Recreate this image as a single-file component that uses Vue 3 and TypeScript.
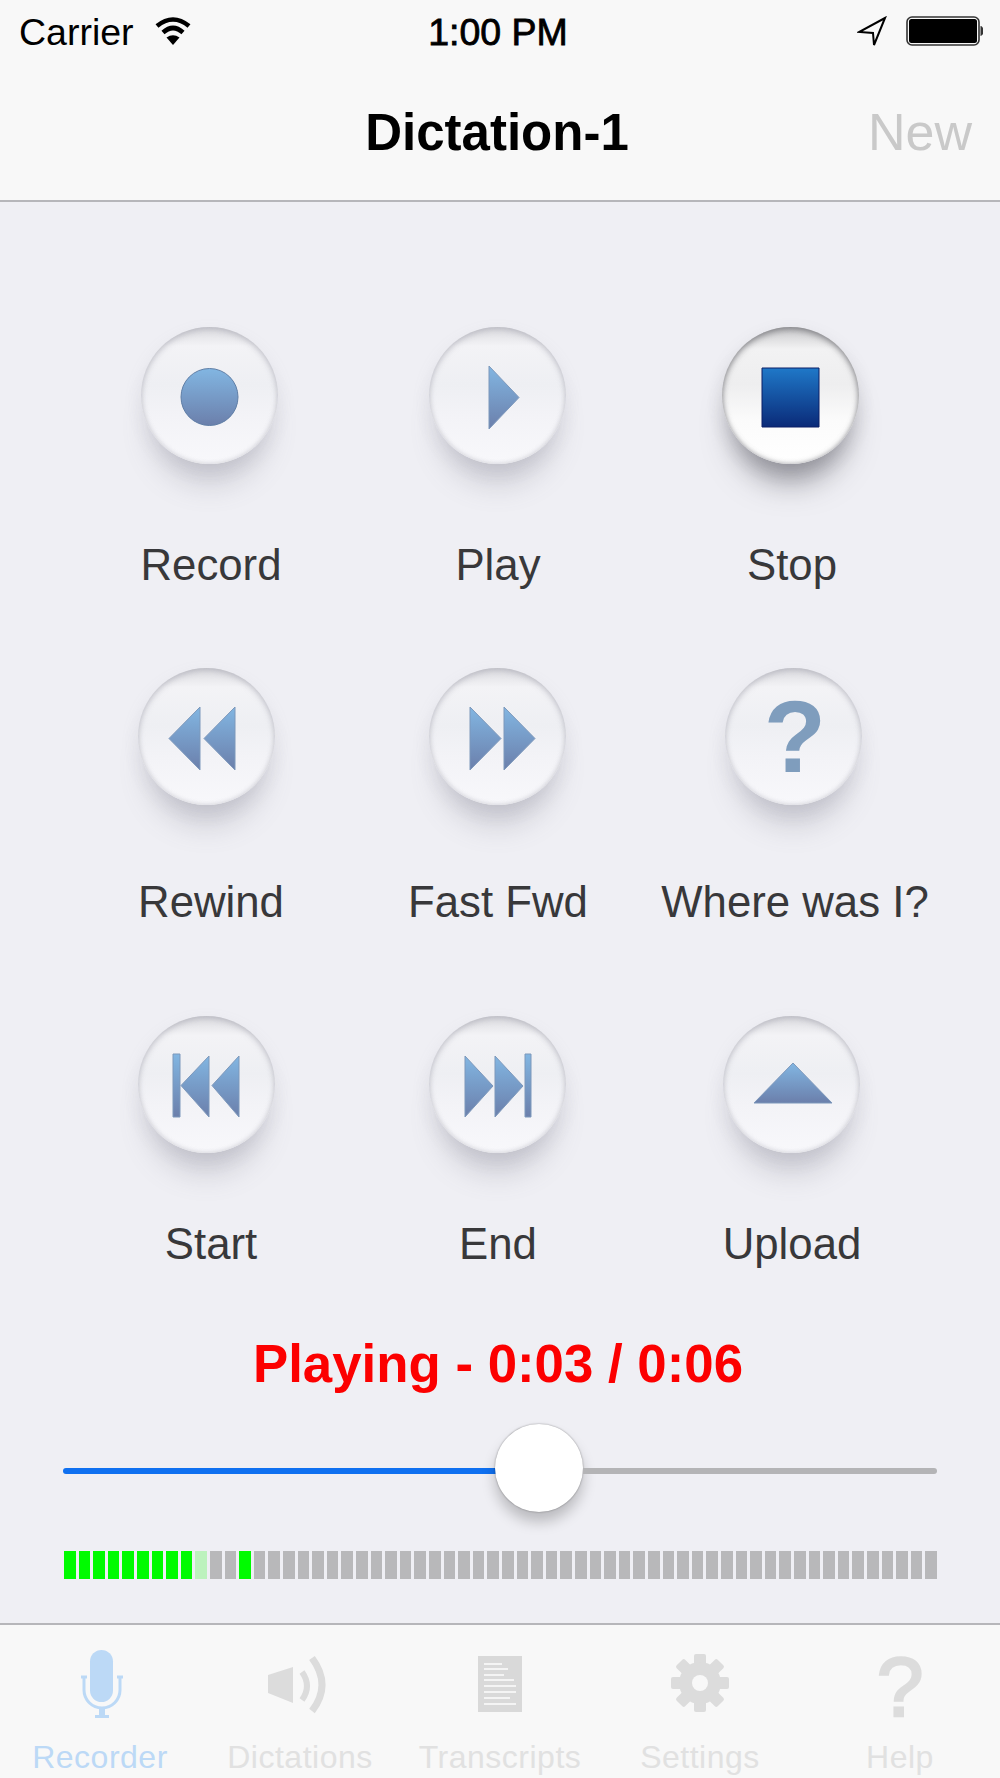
<template>
  <div class="screen">
    <header class="top-bar">
      <div class="status-row">
        <div class="status-left">
          <span class="carrier">Carrier</span>
          <svg class="wifi" width="36" height="29" viewBox="0 0 36 29" fill="none" stroke="#000" stroke-width="4.6">
            <path d="M2 10Q18 -3 34 10" />
            <path d="M8 16.5Q18 7.5 28 16.5" />
            <path d="M11.5 21.5Q18 17 24.5 21.5L18 29Z" fill="#000" stroke="none" />
          </svg>
        </div>
        <span class="clock">1:00 PM</span>
        <div class="status-right">
          <svg width="30" height="31" viewBox="0 0 30 31" fill="none" stroke="#000" stroke-width="2">
            <path d="M28 2L2 16L16 17L17 29Z" stroke-linejoin="miter" />
          </svg>
          <svg width="77" height="30" viewBox="0 0 77 30">
            <rect x="1" y="1" width="72" height="28" rx="5" fill="none" stroke="#333" stroke-width="1.6" />
            <rect x="3" y="3" width="68" height="24" rx="2.5" fill="#000" />
            <path d="M74.5 10a3 5 0 0 1 0 10Z" fill="#333" />
          </svg>
        </div>
      </div>
      <div class="nav-row">
        <h1 class="nav-title">Dictation-1</h1>
        <span class="nav-action">New</span>
      </div>
    </header>

    <main class="recorder">
      <div class="controls">
        <div v-for="btn in buttons" :key="btn.name" class="control" :class="btn.cellClass">
          <div class="orb" :class="{ active: btn.active }">
            <svg width="137" height="137" viewBox="0 0 137 137">
              <defs>
                <linearGradient :id="`grad-${btn.name}`" x1="0" y1="0" x2="0" y2="1">
                  <stop offset="0" :stop-color="btn.active ? '#1f78c8' : '#82b6e2'" />
                  <stop offset="1" :stop-color="btn.active ? '#0a2a78' : '#6b7fab'" />
                </linearGradient>
              </defs>
              <circle
                v-if="btn.circle"
                cx="68.5"
                cy="70"
                r="28.5"
                :fill="`url(#grad-${btn.name})`"
                stroke="#5f7ea6"
              />
              <polygon
                v-for="pts in btn.polys"
                :key="pts"
                :points="pts"
                :fill="`url(#grad-${btn.name})`"
                :stroke="btn.active ? '#0a1f66' : '#7d98bb'"
                stroke-width="1"
              />
              <text v-if="btn.glyph" x="70" y="104" text-anchor="middle" class="orb-glyph">?</text>
            </svg>
          </div>
          <span class="control-label">{{ btn.label }}</span>
        </div>
      </div>

      <div class="state-line">Playing - 0:03 / 0:06</div>

      <div class="slider">
        <div class="track-fill" :style="{ width: fillWidth + 'px' }"></div>
        <div class="thumb"></div>
        <div class="track-rest"></div>
      </div>

      <div class="meter">
        <span v-for="(seg, i) in segments" :key="i" class="seg" :class="seg"></span>
      </div>
    </main>

    <nav class="tabs">
      <div class="tab on">
        <svg width="80" height="80" viewBox="0 0 80 80" fill="#bcd9f6">
          <rect x="30" y="5" width="23" height="52" rx="11.5" />
          <path d="M24 32v13a18 18 0 0 0 36 0v-13M21 32h6M57 32h6" fill="none" stroke="#bcd9f6" stroke-width="3" />
          <rect x="39" y="62" width="6" height="9" />
          <rect x="35" y="70" width="14" height="3" />
        </svg>
        <span>Recorder</span>
      </div>
      <div class="tab">
        <svg width="80" height="80" viewBox="0 0 80 80" fill="#dcdcdc">
          <path d="M8 30L33 22V58L8 48Z" />
          <path d="M42 27Q52 41 42 55" fill="none" stroke="#dcdcdc" stroke-width="6" />
          <path d="M52 13Q72 40 52 66" fill="none" stroke="#dcdcdc" stroke-width="7" />
        </svg>
        <span>Dictations</span>
      </div>
      <div class="tab">
        <svg width="80" height="80" viewBox="0 0 80 80">
          <rect x="18" y="11" width="44" height="56" fill="#d9d9d9" />
          <rect v-for="ln in docLines" :key="ln.y" :x="ln.x" :y="ln.y" :width="ln.w" height="2" fill="#f4f4f4" />
        </svg>
        <span>Transcripts</span>
      </div>
      <div class="tab">
        <svg width="80" height="80" viewBox="0 0 80 80" fill="#dcdcdc">
          <rect
            v-for="deg in gearTeeth"
            :key="deg"
            x="34"
            y="9"
            width="12"
            height="14"
            rx="2"
            :transform="`rotate(${deg} 40 38)`"
          />
          <circle cx="40" cy="38" r="21" />
          <circle cx="40" cy="38" r="8" fill="#f8f8f8" />
        </svg>
        <span>Settings</span>
      </div>
      <div class="tab">
        <div class="help-mark">?</div>
        <span>Help</span>
      </div>
    </nav>
  </div>
</template>

<script setup lang="ts">
interface ControlButton {
  name: string;
  label: string;
  cellClass: string;
  polys: string[];
  circle?: boolean;
  glyph?: boolean;
  active?: boolean;
}

const buttons: ControlButton[] = [
  { name: 'record', label: 'Record', cellClass: 'row-1 shift-a', polys: [], circle: true },
  { name: 'play', label: 'Play', cellClass: 'row-1 shift-d', polys: ['60,39 60,102 90,70.5'] },
  { name: 'stop', label: 'Stop', cellClass: 'row-1 shift-a', polys: ['40,41 97,41 97,100 40,100'], active: true },
  { name: 'rewind', label: 'Rewind', cellClass: 'row-2 shift-b', polys: ['31,70.5 62,39 62,102', '66,70.5 97,39 97,102'] },
  { name: 'ffwd', label: 'Fast Fwd', cellClass: 'row-2 shift-d', polys: ['41,39 41,102 72,70.5', '75,39 75,102 106,70.5'] },
  { name: 'where', label: 'Where was I?', cellClass: 'row-2 shift-c', polys: [], glyph: true },
  {
    name: 'start',
    label: 'Start',
    cellClass: 'row-3 shift-b',
    polys: ['35,38 42,38 42,101 35,101', '43,69.5 71,40 71,101', '74,69.5 101,40 101,101']
  },
  {
    name: 'end',
    label: 'End',
    cellClass: 'row-3 shift-d',
    polys: ['36,40 36,101 64,70', '66,40 66,101 94,70', '96,38 102,38 102,101 96,101']
  },
  { name: 'upload', label: 'Upload', cellClass: 'row-3 shift-d', polys: ['31,87 109,87 70,47'] }
];

// Slider position, track is 434px up to the thumb
const fillWidth = 434;

// Level meter: 60 cells, a few lit
const segments: string[] = Array.from({ length: 60 }, (_, i) => {
  if (i < 9 || i === 12) return 'lit';
  if (i === 9) return 'fading';
  return '';
});

const docLines = [
  { x: 24, y: 18, w: 18 },
  { x: 24, y: 23, w: 24 },
  { x: 24, y: 29, w: 20 },
  { x: 24, y: 34, w: 30 },
  { x: 24, y: 40, w: 32 },
  { x: 24, y: 46, w: 32 },
  { x: 24, y: 52, w: 26 },
  { x: 24, y: 58, w: 32 }
];

const gearTeeth = [0, 45, 90, 135, 180, 225, 270, 315];
</script>

<style scoped>
.screen {
  width: 1000px;
  height: 1778px;
  display: flex;
  flex-direction: column;
  overflow: hidden;
  background: #efeff4;
  font-family: "Liberation Sans", Arial, sans-serif;
}

.top-bar {
  height: 200px;
  background: #f8f8f8;
  border-bottom: 2px solid #b6b6ba;
  flex: none;
}

.status-row {
  position: relative;
  display: flex;
  justify-content: space-between;
  align-items: flex-start;
  height: 62px;
  padding: 0 17px 0 19px;
  color: #000;
}

.status-left {
  display: flex;
  align-items: flex-start;
  gap: 21px;
  padding-top: 11px;
}

.carrier,
.clock {
  font-size: 37.5px;
  line-height: 43px;
}

.wifi {
  margin-top: 5px;
}

.clock {
  position: absolute;
  left: 0;
  right: 4px;
  top: 11px;
  text-align: center;
  -webkit-text-stroke: 0.8px #000;
}

.status-right {
  display: flex;
  align-items: flex-start;
  gap: 19px;
  padding-top: 16px;
}

.nav-row {
  position: relative;
  display: flex;
  justify-content: center;
  padding-top: 42px;
}

.nav-title {
  margin: 0;
  padding-right: 6px;
  font-size: 51px;
  line-height: 58px;
  font-weight: 700;
  color: #000;
}

.nav-action {
  position: absolute;
  right: 28px;
  top: 41px;
  font-size: 52px;
  line-height: 58px;
  color: #c9c9c9;
}

.recorder {
  flex: 1;
  display: flex;
  flex-direction: column;
  padding: 125px 63px 0;
}

.controls {
  display: grid;
  grid-template-columns: 282px 292px 296px;
  grid-template-rows: 341px 348px 318px;
  margin-left: 7px;
  flex: none;
}

.control {
  display: flex;
  flex-direction: column;
  align-items: center;
}

.orb {
  width: 137px;
  height: 137px;
  border-radius: 50%;
  flex: none;
  filter: blur(0.6px);
  background: linear-gradient(#dcdce0 0%, #f3f3f6 14%, #eeeff3 42%, #f3f3f7 65%, #f8f8fb 100%);
  box-shadow:
    inset 0 3px 6px rgba(165, 165, 175, 0.45),
    inset 0 0 5px rgba(165, 165, 175, 0.4),
    0 30px 30px -12px rgba(110, 110, 125, 0.3),
    0 8px 18px rgba(150, 150, 165, 0.14);
}

.orb.active {
  background: linear-gradient(#c9c9cb 0%, #f2f2f3 16%, #eeeeef 42%, #fbfbfb 68%, #fff 100%);
  box-shadow:
    inset 0 3px 6px rgba(110, 110, 115, 0.6),
    inset 0 0 5px rgba(110, 110, 115, 0.5),
    0 30px 30px -12px rgba(70, 70, 80, 0.5),
    0 8px 18px rgba(110, 110, 120, 0.2);
}

.orb svg {
  display: block;
}

.orb-glyph {
  font-family: "Liberation Sans", Arial, sans-serif;
  font-size: 102px;
  font-weight: 700;
  fill: #7f9dbd;
}

.control-label {
  font-size: 43.75px;
  line-height: 50px;
  color: #38383a;
  white-space: nowrap;
}

.row-1 .control-label {
  margin-top: 76px;
}

.row-2 .control-label {
  margin-top: 72px;
}

.row-3 .control-label {
  margin-top: 66px;
}

.shift-a .orb {
  margin-right: 3px;
}

.shift-b .orb {
  margin-right: 10px;
}

.shift-c .orb {
  margin-left: 2px;
}

.shift-c .control-label {
  margin-left: 6px;
}

.shift-d .orb {
  margin-right: 2px;
}

.state-line {
  height: 60px;
  padding-right: 4px;
  font-size: 52.8px;
  line-height: 60px;
  font-weight: 700;
  color: #fc0000;
  text-align: center;
  flex: none;
}

.slider {
  display: flex;
  align-items: center;
  height: 89px;
  margin-top: 29px;
  flex: none;
}

.track-fill,
.track-rest {
  height: 6px;
  margin-top: 7px;
  border-radius: 3px 0 0 3px;
  background: #0f70f0;
  flex: none;
}

.track-rest {
  flex: 1;
  border-radius: 0 3px 3px 0;
  background: #b4b4b6;
}

.thumb {
  width: 88px;
  height: 88px;
  margin-left: -2px;
  margin-top: 1px;
  border-radius: 50%;
  background: #fff;
  flex: none;
  box-shadow:
    0 0 2px rgba(0, 0, 0, 0.4),
    0 10px 14px rgba(0, 0, 0, 0.22);
}

.meter {
  display: grid;
  grid-template-columns: repeat(60, 1fr);
  column-gap: 3px;
  height: 28px;
  margin-top: 39px;
  margin-left: 1px;
  flex: none;
}

.seg {
  background: #b8b8ba;
}

.seg.lit {
  background: #00fb00;
}

.seg.fading {
  background: #bcf2bd;
}

.tabs {
  height: 155px;
  flex: none;
  display: grid;
  grid-template-columns: repeat(5, 1fr);
  background: #f8f8f8;
  border-top: 2px solid #b6b6ba;
  box-sizing: border-box;
}

.tab {
  display: flex;
  flex-direction: column;
  align-items: center;
  padding-top: 20px;
  color: #e1e1e1;
  font-size: 32px;
  line-height: 38px;
  letter-spacing: 0.5px;
}

.tab.on {
  color: #bcd9f6;
}

.tab svg {
  display: block;
  flex: none;
}

.tab span {
  margin-top: 13px;
  white-space: nowrap;
}

.help-mark {
  height: 80px;
  font-size: 84px;
  line-height: 84px;
  letter-spacing: 0;
  color: #dcdcdc;
  -webkit-text-stroke: 2.5px #dcdcdc;
}
</style>
